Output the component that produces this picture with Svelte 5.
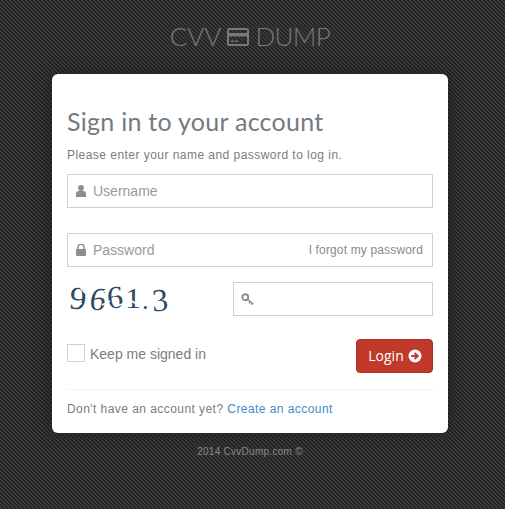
<script>
  const captcha = [
    { c: '9', cls: 'a' }, { c: '6', cls: 'b' }, { c: '6', cls: 'c' },
    { c: '1', cls: 'd' }, { c: '.', cls: 'e' }, { c: '3', cls: 'f' }
  ];
</script>

<div class="page">
  <div class="logo">
    <span>CVV</span>
    <svg class="card-icon" width="22" height="18" viewBox="0 0 22 18" aria-hidden="true">
      <rect x="1" y="1" width="20" height="16" rx="1.5" fill="none" stroke="currentColor" stroke-width="2"/>
      <rect x="1" y="5" width="20" height="3.5" fill="currentColor"/>
      <rect x="4" y="12.5" width="3" height="1.5" fill="currentColor"/>
      <rect x="8" y="12.5" width="3" height="1.5" fill="currentColor"/>
    </svg>
    <span class="dump">DUMP</span>
  </div>

  <form class="card" onsubmit={(e) => e.preventDefault()}>
    <h3>Sign in to your account</h3>
    <p class="hint">Please enter your name and password to log in.</p>

    <div class="field first">
      <svg class="icon" width="12" height="12" viewBox="0 0 12 12" aria-hidden="true">
        <circle cx="6" cy="3" r="2.9" fill="currentColor"/>
        <path d="M1 12V8.4C1 7 2.2 6 3.4 6h5.2C9.8 6 11 7 11 8.4V12z" fill="currentColor"/>
      </svg>
      <input type="text" placeholder="Username" />
    </div>

    <div class="field second">
      <svg class="icon" width="11" height="12" viewBox="0 0 11 12" aria-hidden="true">
        <path d="M2.4 5.2V3.4a3.1 3.1 0 0 1 6.2 0v1.8" fill="none" stroke="currentColor" stroke-width="1.5"/>
        <rect x="0.5" y="5" width="10" height="7" rx="0.8" fill="currentColor"/>
      </svg>
      <input type="password" placeholder="Password" />
      <a class="forgot" href="#forgot">I forgot my password</a>
    </div>

    <div class="captcha-row">
      <div class="captcha" aria-label="captcha">
        {#each captcha as g}<span class="glyph {g.cls}">{g.c}</span>{/each}
        <svg class="cuts" width="100" height="34" viewBox="0 0 100 34" aria-hidden="true">
          <path d="M2 19 12 23M10 6 15 12M28 14 38 8M32 24 40 20M43 15 54 11M47 25 55 22M62 8 68 5M62 20 68 24M78 10 86 6M78 22 90 18" stroke="#fff" stroke-width="1.6" fill="none"/>
        </svg>
      </div>
      <div class="field captcha-field">
        <svg class="icon" width="14" height="13" viewBox="0 0 14 13" aria-hidden="true">
          <circle cx="4.2" cy="4.2" r="3" fill="none" stroke="currentColor" stroke-width="1.9"/>
          <path d="M6.5 6.5l6 4.5M9.2 8.5l-1.2 1.8M11.3 10l-1 1.6" fill="none" stroke="currentColor" stroke-width="1.5"/>
        </svg>
        <input type="text" />
      </div>
    </div>

    <div class="actions">
      <label class="keep">
        <span class="box"></span>
        <span>Keep me signed in</span>
      </label>
      <button type="submit">
        Login
        <svg width="14" height="14" viewBox="0 0 14 14" aria-hidden="true">
          <circle cx="7" cy="7" r="6.5" fill="currentColor"/>
          <path d="M3.2 7h6M6.6 3.9 9.7 7l-3.1 3.1" fill="none" stroke="#c0392b" stroke-width="2"/>
        </svg>
      </button>
    </div>

    <p class="signup">Don't have an account yet? <a href="#create">Create an account</a></p>
  </form>

  <p class="copy">2014 CvvDump.com ©</p>
</div>

<style>
  :global(body) {
    margin: 0;
    background-color: #2c2c2c;
    background-image:
      linear-gradient(45deg, #3a3a3a 25%, #242424 25%, #242424 50%, #3a3a3a 50%, #3a3a3a 75%, #242424 75%);
    background-size: 4px 4px;
    font-family: "Liberation Sans", Arial, sans-serif;
  }

  .page {
    width: 500px;
    height: 509px;
    overflow: hidden;
    box-sizing: border-box;
    padding-top: 20px;
  }

  .logo {
    height: 32px;
    display: flex;
    align-items: center;
    justify-content: center;
    gap: 6px;
    font-family: Lato, sans-serif;
    font-weight: 300;
    font-size: 26px;
    line-height: 32px;
    color: #787878;
  }

  .dump { letter-spacing: -0.6px; }
  .card-icon { margin-top: 2px; }

  .card {
    box-sizing: border-box;
    width: 396px;
    height: 359px;
    margin: 22px auto 0;
    padding: 29px 15px 0;
    background: #fff;
    border-radius: 6px;
    box-shadow: 0 0 18px rgba(0, 0, 0, 0.35);
    color: #7c7c7c;
    font-size: 14px;
  }

  h3 {
    margin: 0;
    font-family: Lato, sans-serif;
    font-weight: 400;
    font-size: 25px;
    line-height: 36px;
    letter-spacing: 0.27px;
    color: #757a80;
  }

  .hint {
    margin: 6px 0 0;
    font-size: 12px;
    line-height: 20px;
    color: #7c7c7c;
    letter-spacing: 0.46px;
  }

  .field {
    box-sizing: border-box;
    height: 34px;
    display: flex;
    align-items: center;
    border: 1px solid #cfd0d2;
    background: #fff;
    color: #8e8e8e;
  }

  .field.first { margin-top: 9px; }
  .field.second { margin-top: 25px; }

  .icon { flex: none; margin-left: 7px; }
  .field.first .icon, .field.second .icon { width: 12px; }

  input {
    flex: 1;
    min-width: 0;
    border: 0;
    outline: 0;
    padding: 0;
    margin-left: 6px;
    background: transparent;
    font: 14px "Liberation Sans", Arial, sans-serif;
    color: #555;
  }

  input::placeholder { color: #9a9a9a; opacity: 1; }

  .forgot {
    margin-right: 9px;
    font-size: 12px;
    color: #8a8a8a;
    text-decoration: none;
    white-space: nowrap;
    letter-spacing: 0.15px;
  }

  .captcha-row {
    display: flex;
    justify-content: space-between;
    align-items: center;
    margin-top: 15px;
    height: 34px;
  }

  .captcha {
    position: relative;
    display: flex;
    align-items: baseline;
    gap: 1px;
    margin-left: 3px;
    font-family: "Liberation Serif", serif;
    font-size: 32px;
    line-height: 34px;
    color: #2b4a66;
  }

  .cuts { position: absolute; left: 0; top: 0; }

  .glyph { display: inline-block; }
  .a { transform: scaleX(1.05) rotate(5deg); margin-right: 3px; }
  .b { transform: translateY(1px) skewX(-8deg); }
  .c { transform: translateY(-1px) rotate(-4deg); margin-right: 1px; }
  .d { transform: scaleY(0.95); }
  .e { margin-right: 2px; font-size: 26px; }
  .f { transform: translateY(2px) rotate(-4deg); }

  .captcha-field { width: 200px; }

  .actions {
    display: flex;
    justify-content: space-between;
    align-items: flex-start;
    margin-top: 23px;
    height: 50px;
    border-bottom: 1px solid #f2f2f2;
  }

  .keep {
    display: flex;
    align-items: center;
    gap: 5px;
    margin-top: 5px;
    font-size: 14px;
    color: #7c7c7c;
  }

  .keep span:last-child { position: relative; top: 1px; }

  .box {
    box-sizing: border-box;
    width: 18px;
    height: 18px;
    border: 1px solid #cfd0d2;
  }

  button {
    box-sizing: border-box;
    width: 77px;
    height: 34px;
    display: flex;
    align-items: center;
    justify-content: center;
    gap: 4px;
    padding: 0 0 1px 1px;
    border: 1px solid #ab2f22;
    border-radius: 4px;
    background: #c0392b;
    color: #fff;
    font-family: "Open Sans", sans-serif;
    font-size: 14px;
  }

  .signup {
    margin: 9px 0 0;
    font-size: 12px;
    line-height: 20px;
    letter-spacing: 0.44px;
    color: #7c7c7c;
  }

  .signup a { color: #428bca; text-decoration: none; }

  .copy {
    margin: 12px 0 0;
    text-align: center;
    font-size: 10px;
    line-height: 14px;
    color: #8a8a8a;
    letter-spacing: 0.27px;
  }
</style>
